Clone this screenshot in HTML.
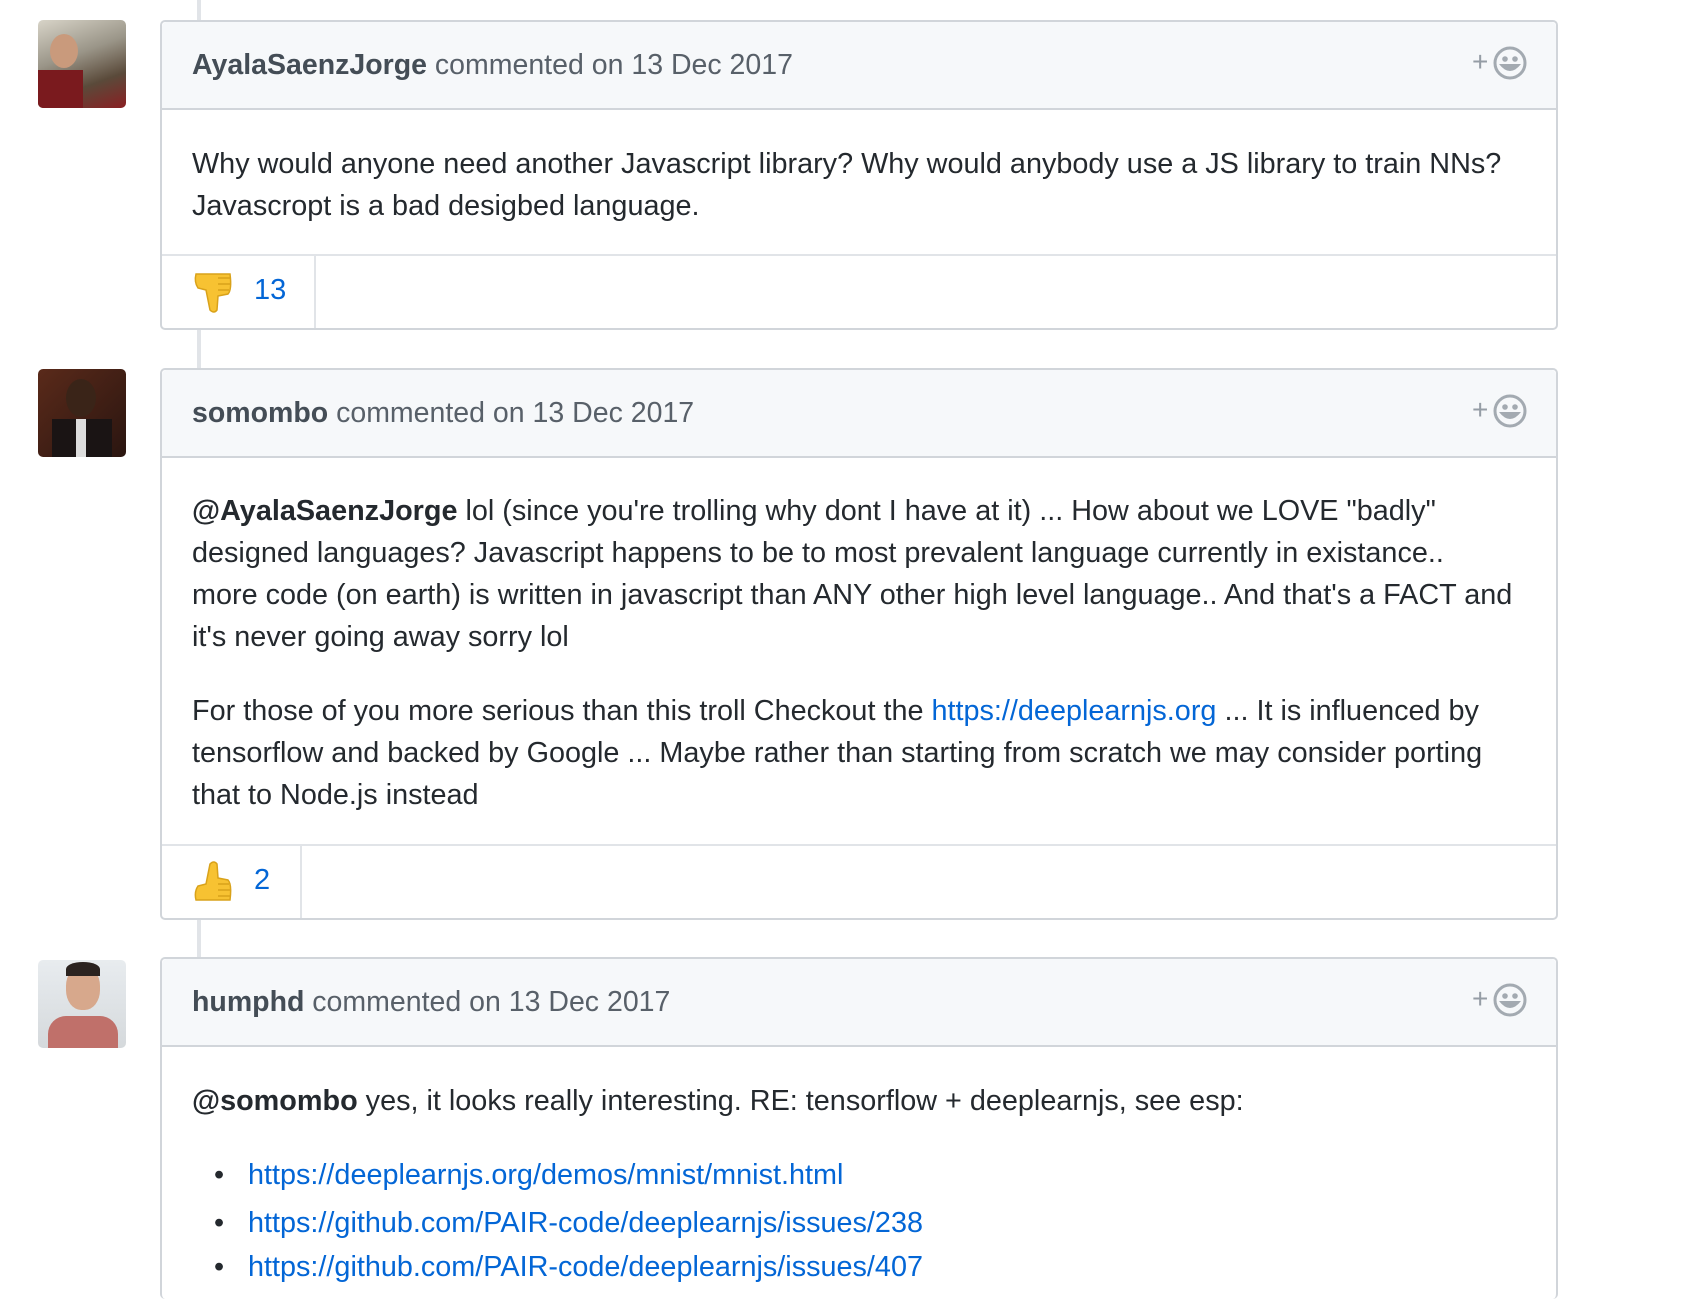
<!DOCTYPE html>
<html><head><meta charset="utf-8"><style>
body{margin:0;width:1700px;height:1272px;overflow:hidden;background:#fff;font-family:"Liberation Sans",Arial,sans-serif;position:relative}
.line{position:absolute;left:197px;width:4px;background:#e1e4e8}
.av{position:absolute;left:38px;width:88px;height:88px;border-radius:5px;overflow:hidden}
.box{position:absolute;left:160px;width:1394px;border:2px solid #d1d5da;border-radius:5px;background:#fff}
.hd{position:absolute;left:0;right:0;top:0;height:86px;background:#f6f8fa;border-bottom:2px solid #d1d5da;border-radius:5px 5px 0 0}
.ht{position:absolute;left:30px;top:0;line-height:86px;font-size:28.5px;color:#586069;white-space:nowrap}
.ht b{color:#444d56}
.em{position:absolute;right:28px;top:24px}
.t{position:absolute;left:30px;font-size:28.8px;color:#24292e;white-space:nowrap;line-height:42px}
.t b{font-weight:bold}
a{color:#0366d6;text-decoration:none}
.rx{position:absolute;left:0;right:0;bottom:0;border-top:2px solid #e1e4e8}
.rb{position:absolute;left:0;top:0;bottom:0;border-right:2px solid #e1e4e8}
.rn{position:absolute;font-size:29px;color:#0366d6}
</style></head><body>
<div class="line" style="top:0;height:22px"></div>
<div class="line" style="top:330px;height:40px"></div>
<div class="line" style="top:920px;height:40px"></div>

<div class="av" style="top:20px;background:linear-gradient(160deg,#d8d4c8 0%,#9a9588 40%,#5a4a3a 70%,#8a1f22 100%)"><div style="position:absolute;left:12px;top:14px;width:28px;height:34px;border-radius:50%;background:#c99a7c"></div><div style="position:absolute;left:0;top:50px;width:45px;height:38px;background:#7a1a1e"></div></div>
<div class="av" style="top:369px;background:linear-gradient(135deg,#5a2a1a,#2a1510)"><div style="position:absolute;left:28px;top:10px;width:30px;height:38px;border-radius:50%;background:#3a2418"></div><div style="position:absolute;left:14px;top:50px;width:60px;height:38px;background:#1a1414"></div><div style="position:absolute;left:38px;top:50px;width:10px;height:38px;background:#ddd"></div></div>
<div class="av" style="top:960px;background:linear-gradient(180deg,#e8ecef,#d5d9dc)"><div style="position:absolute;left:28px;top:6px;width:34px;height:44px;border-radius:45%;background:#d7a88c"></div><div style="position:absolute;left:28px;top:2px;width:34px;height:14px;border-radius:50% 50% 0 0;background:#2b2320"></div><div style="position:absolute;left:10px;top:56px;width:70px;height:32px;border-radius:18px 18px 0 0;background:#c0706a"></div></div>

<svg width="0" height="0" style="position:absolute"><defs><g id="smile"><text x="0" y="24" font-size="28" fill="#959da5" font-family="Liberation Sans">+</text><circle cx="38" cy="16" r="15" fill="none" stroke="#a3aab1" stroke-width="3"/><circle cx="33" cy="12" r="2.8" fill="#a3aab1"/><circle cx="43" cy="12" r="2.8" fill="#a3aab1"/><path d="M27 17 Q38 31 49 17 Z" fill="#a3aab1"/></g></defs></svg>

<div class="box" style="top:20px;height:306px">
<div class="hd"><div class="ht"><b>AyalaSaenzJorge</b> commented on 13 Dec 2017</div><svg class="em" width="56" height="36" viewBox="0 0 56 34"><use href="#smile"/></svg></div>
<div class="t" style="top:121px">Why would anyone need another Javascript library? Why would anybody use a JS library to train NNs?</div>
<div class="t" style="top:163px">Javascropt is a bad desigbed language.</div>
<div class="rx" style="height:72px"><div class="rb" style="width:152px"></div>
<svg style="position:absolute;left:30px;top:14px" width="42" height="44" viewBox="0 0 42 44"><path d="M4 4 Q2 12 6 18 L14 20 L18 40 Q22 44 25 40 L26 26 L36 24 Q40 20 38 4 Z" fill="#f7c232" stroke="#d9a21a" stroke-width="1.5"/><path d="M26 8 H38 M26 14 H38 M26 20 H37" stroke="#d9a21a" stroke-width="1.5"/></svg>
<div class="rn" style="left:92px;top:18px">13</div></div>
</div>

<div class="box" style="top:368px;height:548px">
<div class="hd"><div class="ht"><b>somombo</b> commented on 13 Dec 2017</div><svg class="em" width="56" height="36" viewBox="0 0 56 34"><use href="#smile"/></svg></div>
<div class="t" style="top:120px"><b>@AyalaSaenzJorge</b> lol (since you're trolling why dont I have at it) ... How about we LOVE "badly"</div>
<div class="t" style="top:162px">designed languages? Javascript happens to be to most prevalent language currently in existance..</div>
<div class="t" style="top:204px">more code (on earth) is written in javascript than ANY other high level language.. And that's a FACT and</div>
<div class="t" style="top:246px">it's never going away sorry lol</div>
<div class="t" style="top:320px">For those of you more serious than this troll Checkout the <a>https://deeplearnjs.org</a> ... It is influenced by</div>
<div class="t" style="top:362px">tensorflow and backed by Google ... Maybe rather than starting from scratch we may consider porting</div>
<div class="t" style="top:404px">that to Node.js instead</div>
<div class="rx" style="height:72px"><div class="rb" style="width:138px"></div>
<svg style="position:absolute;left:30px;top:14px" width="42" height="44" viewBox="0 0 42 44"><path d="M4 40 Q2 32 6 26 L14 24 L18 4 Q22 0 25 4 L26 18 L36 20 Q40 24 38 40 Z" fill="#f7c232" stroke="#d9a21a" stroke-width="1.5"/><path d="M26 36 H38 M26 30 H38 M26 24 H37" stroke="#d9a21a" stroke-width="1.5"/></svg>
<div class="rn" style="left:92px;top:18px">2</div></div>
</div>

<div class="box" style="top:957px;height:340px;border-bottom:none">
<div class="hd"><div class="ht"><b>humphd</b> commented on 13 Dec 2017</div><svg class="em" width="56" height="36" viewBox="0 0 56 34"><use href="#smile"/></svg></div>
<div class="t" style="top:121px"><b>@somombo</b> yes, it looks really interesting. RE: tensorflow + deeplearnjs, see esp:</div>
<div class="t" style="top:195px;left:52px">•</div><div class="t" style="top:195px;left:86px"><a>https://deeplearnjs.org/demos/mnist/mnist.html</a></div>
<div class="t" style="top:243px;left:52px">•</div><div class="t" style="top:243px;left:86px"><a>https://github.com/PAIR-code/deeplearnjs/issues/238</a></div>
<div class="t" style="top:287px;left:52px">•</div><div class="t" style="top:287px;left:86px"><a>https://github.com/PAIR-code/deeplearnjs/issues/407</a></div>
</div>
</body></html>
